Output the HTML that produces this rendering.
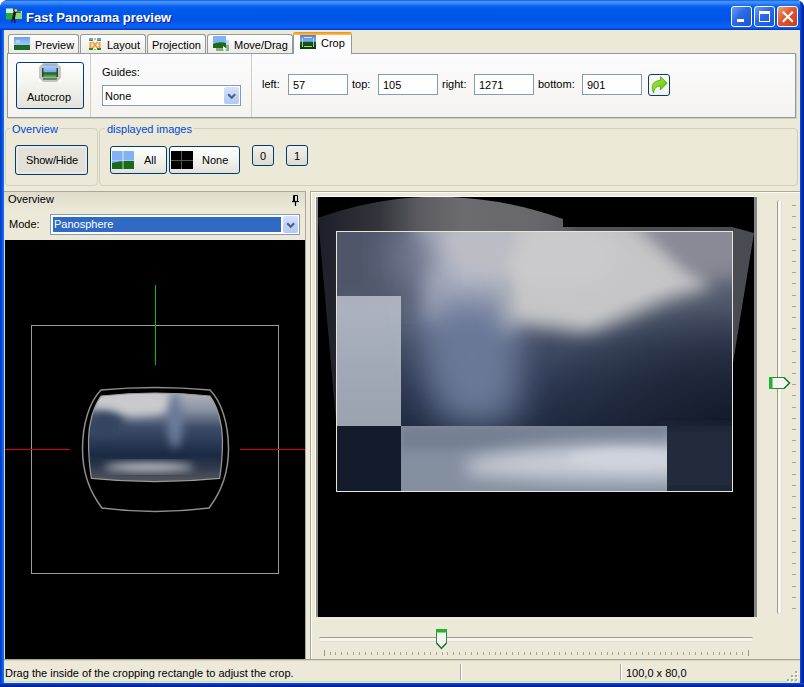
<!DOCTYPE html>
<html><head><meta charset="utf-8">
<style>
*{box-sizing:border-box;margin:0;padding:0}
html,body{width:804px;height:687px;overflow:hidden;background:#fff}
body{position:relative;font-family:"Liberation Sans",sans-serif;font-size:11px;color:#000}
.a{position:absolute}
#win{position:absolute;left:0;top:0;width:804px;height:687px;background:#0831d9;border-radius:8px 8px 0 0;overflow:hidden}
#title{position:absolute;left:0;top:0;width:804px;height:30px;
 background:linear-gradient(#0a3fd0 0px,#3d95ff 1px,#3a8cf8 3px,#0f64ea 6px,#0058ee 9px,#0055e5 20px,#0a5ff5 25px,#0b5ff8 28px,#0040c8 29px,#0040c8 30px)}
#ttext{position:absolute;left:26px;top:10px;color:#fff;font-weight:bold;font-size:13px;text-shadow:1px 1px #0a1e8a;letter-spacing:0}
#lb{position:absolute;left:0;top:30px;width:4px;height:657px;background:linear-gradient(90deg,#0030b8,#0055e5 2px,#166aee 3px)}
#rb{position:absolute;left:800px;top:0px;width:4px;height:687px;background:linear-gradient(90deg,#0a50e8,#0040d0 1px,#0030b0 2px,#001c88)}
#bb{position:absolute;left:0;top:683px;width:804px;height:4px;background:linear-gradient(#0a50e8,#0040d0 1px,#0030b0 2px,#001c88)}
#client{position:absolute;left:4px;top:30px;width:796px;height:653px;background:#ece9d8}
.tab{position:absolute;top:34px;height:19px;border:1px solid #919b9c;border-bottom:none;border-radius:3px 3px 0 0;background:linear-gradient(#fff,#ecebe6);}
.tab span{position:absolute;top:4px}
.tab.sel{top:32px;height:22px;background:#fcfcfe;border-top:none;z-index:2}
.tab.sel:before{content:"";position:absolute;left:-1px;right:-1px;top:0;height:3px;background:linear-gradient(#e68b2c,#ffc73c);border-radius:3px 3px 0 0}
#panel{position:absolute;left:7px;top:53px;width:789px;height:65px;border:1px solid #919b9c;border-top-color:#919b9c;background:linear-gradient(#fcfcfe,#f4f3ee);box-shadow:1px 1px 0 #d0cec0}
.btn{position:absolute;border:1px solid #003c74;border-radius:3px;background:linear-gradient(#fff,#f0f0ea 60%,#e3e2da);text-align:center}
.tb{position:absolute;height:21px;border:1px solid #7f9db9;background:#fff;padding:4px 0 0 4px;font-size:11px}
.grp{position:absolute;border:1px solid #d0d0bf;border-radius:4px}
.glab{position:absolute;color:#0046d5;background:#ece9d8;padding:0 2px}
.tbtn{position:absolute;top:6px;width:21px;height:21px;border:1px solid #fff;border-radius:3px;background:linear-gradient(135deg,#6a9cf8,#2a67e6 45%,#1b55d8);overflow:hidden}
.tbtn.cls{background:linear-gradient(135deg,#f0a080,#e0552f 45%,#c8401c)}
</style></head><body>
<div id="win">
 <div id="title"></div>
 <div id="ttext">Fast Panorama preview</div>
 <div id="lb"></div><div id="rb"></div><div id="bb"></div>
 <div class="tbtn" style="left:731px"><div class="a" style="left:5px;top:12px;width:7px;height:3px;background:#fff"></div></div>
 <div class="tbtn" style="left:754px"><div class="a" style="left:4px;top:4px;width:11px;height:11px;border:1px solid #fff;border-top-width:3px"></div></div>
 <div class="tbtn cls" style="left:777px"><svg class="a" style="left:0;top:0" width="21" height="21"><path d="M4.8 4.8L14.8 14.8M14.8 4.8L4.8 14.8" stroke="#fff" stroke-width="2"/></svg></div>
 <svg class="a" style="left:6px;top:8px" width="17" height="16" viewBox="0 0 17 16">
  <rect x="0" y="0.5" width="7" height="11" fill="#20b030"/>
  <rect x="0" y="0.5" width="7" height="4.5" fill="#c8f0f0"/>
  <rect x="7" y="3" width="9" height="8" fill="#90d870"/>
  <rect x="7" y="3" width="9" height="1.5" fill="#d8f8e8"/>
  <path d="M8.5 1.5 L11 1.5 L11 3.5 L15 3.5 L15 4.5 L10 4.8 L9 10 L9.5 15 L8.3 15 L7.5 10.5 L6 14.5 L5 14.5 L6.5 9 L7.5 3.5 Z" fill="#101018"/>
  <circle cx="9.8" cy="2.5" r="1.4" fill="#f0d030"/>
 </svg>
</div>
<div id="client">
</div>
<!-- tabs -->
<div class="tab" style="left:8px;width:71px"><span style="left:26px">Preview</span>
 <svg class="a" style="left:5px;top:2px" width="16" height="13"><defs><linearGradient id="gsky" x1="0" y1="0" x2="0" y2="1"><stop offset="0" stop-color="#6f9ef0"/><stop offset="1" stop-color="#a8cdfb"/></linearGradient></defs>
 <rect x="0" y="0" width="16" height="9" fill="url(#gsky)"/><rect x="0" y="8" width="16" height="5" fill="#1b6a1e"/><rect x="2" y="3" width="4" height="3" fill="#cfe3fb" opacity=".6"/></svg></div>
<div class="tab" style="left:80px;width:66px"><span style="left:26px">Layout</span>
 <svg class="a" style="left:7px;top:2px" width="14" height="14">
 <rect x="1" y="1" width="4" height="2" fill="#6a9ee8"/><rect x="9" y="1" width="4" height="2" fill="#6a9ee8"/><rect x="6" y="1" width="2" height="2" fill="#f0c030"/>
 <rect x="1" y="3" width="4" height="1" fill="#3a9a4a"/><rect x="9" y="3" width="4" height="1" fill="#3a9a4a"/>
 <rect x="1.5" y="5" width="2" height="6" fill="#f39a3c"/><rect x="10.5" y="5" width="2" height="6" fill="#f39a3c"/>
 <path d="M4.5 5L9.5 11M9.5 5L4.5 11" stroke="#f39a3c" stroke-width="1.8"/>
 <rect x="1" y="11" width="4" height="2" fill="#2a8a1a"/><rect x="9" y="11" width="4" height="2" fill="#2a8a1a"/><rect x="6" y="12" width="2" height="1" fill="#c0a040"/></svg></div>
<div class="tab" style="left:147px;width:59px"><span style="left:4px">Projection</span></div>
<div class="tab" style="left:207px;width:86px"><span style="left:26px">Move/Drag</span>
 <svg class="a" style="left:5px;top:1px" width="17" height="16">
 <rect x="3" y="4" width="13" height="11" fill="#8aae8a"/><rect x="3" y="4" width="13" height="5" fill="#c8d8f0"/>
 <rect x="0" y="0" width="13" height="12" fill="#1a6a1a"/><path d="M0 0H13V7Q6 5 0 8Z" fill="#7fb2f8"/>
 <path d="M10 10L14 13L12 13.5L13 15L11 15L10 13Z" fill="#fff"/></svg></div>
<div class="tab sel" style="left:293px;width:59px"><span style="left:27px;top:5px">Crop</span>
 <svg class="a" style="left:6px;top:3px" width="16" height="14">
 <defs><linearGradient id="gcrop" x1="0" y1="0" x2="0" y2="1"><stop offset="0" stop-color="#5a7ad8"/><stop offset=".45" stop-color="#7ab0f8"/><stop offset=".5" stop-color="#1a5a1a"/><stop offset="1" stop-color="#0a3a0a"/></linearGradient></defs>
 <rect x="0" y="0" width="16" height="14" fill="url(#gcrop)"/>
 <rect x="4" y="2" width="8" height="1" fill="#d8e4fb"/><rect x="4" y="11" width="8" height="1" fill="#b8d0a8"/>
 <rect x="2" y="3" width="1" height="9" fill="#c8e0c0" opacity=".8"/><rect x="13" y="3" width="1" height="9" fill="#c8e0c0" opacity=".8"/></svg></div>
<div id="panel"></div>
<div class="btn" style="left:16px;top:62px;width:68px;height:47px"><span class="a" style="left:10px;top:28px">Autocrop</span>
 <svg class="a" style="left:22px;top:0px" width="22" height="19">
 <defs><linearGradient id="gac" x1="0" y1="0" x2="0" y2="1"><stop offset="0" stop-color="#8a9ab8"/><stop offset=".12" stop-color="#a8c8f8"/><stop offset=".5" stop-color="#78a8f0"/><stop offset=".55" stop-color="#1a5a1a"/><stop offset=".75" stop-color="#4a9a4a"/><stop offset=".88" stop-color="#8ac08a"/><stop offset="1" stop-color="#1a3a1a"/></linearGradient></defs>
 <rect x="0" y="0" width="22" height="19" fill="#c4c4c0"/>
 <rect x="4" y="1.5" width="14" height="15" fill="url(#gac)"/>
 <rect x="3" y="5" width="1.5" height="9" fill="#2a4a2a"/><rect x="17.5" y="5" width="1.5" height="9" fill="#2a4a2a"/>
 <path d="M0 0H4L0 4Z M22 0H18L22 4Z M0 19H4L0 15Z M22 19H18L22 15Z" fill="#fff"/></svg></div>
<div class="a" style="left:90px;top:54px;width:1px;height:63px;background:#d0cec0"></div>
<div class="a" style="left:102px;top:66px">Guides:</div>
<div class="tb" style="left:102px;top:85px;width:139px;padding-left:2px">None
 <div class="a" style="left:121px;top:1px;width:15px;height:17px;border-radius:2px;background:linear-gradient(#d8e2fc,#c0d0f8 60%,#b4c8f6)"></div>
 <svg class="a" style="left:124px;top:7px" width="10" height="7"><path d="M1.2 1.2L4.7 4.7L8.2 1.2" stroke="#4d6185" stroke-width="2.2" fill="none"/></svg></div>
<div class="a" style="left:251px;top:54px;width:1px;height:63px;background:#d0cec0"></div>
<div class="a" style="left:262px;top:78px">left:</div>
<div class="tb" style="left:288px;top:74px;width:60px">57</div>
<div class="a" style="left:352px;top:78px">top:</div>
<div class="tb" style="left:378px;top:74px;width:60px">105</div>
<div class="a" style="left:442px;top:78px">right:</div>
<div class="tb" style="left:474px;top:74px;width:60px">1271</div>
<div class="a" style="left:538px;top:78px">bottom:</div>
<div class="tb" style="left:582px;top:74px;width:60px">901</div>
<div class="btn" style="left:648px;top:74px;width:22px;height:22px;background:linear-gradient(#fdfdfb,#f2f1ec)">
 <svg class="a" style="left:0px;top:0px" width="20" height="20"><defs><linearGradient id="garr" x1="0" y1="0" x2="1" y2="1"><stop offset="0" stop-color="#a8f040"/><stop offset=".6" stop-color="#7ad020"/><stop offset="1" stop-color="#4aa010"/></linearGradient></defs>
 <path d="M11.4 1.5 L18.2 8.2 L11.4 15 L11.4 11.2 C 7.5 11 5.2 13 4.6 18 C 2 13 2.5 5.8 11.4 5.3 Z" fill="url(#garr)" stroke="#4a9a10" stroke-width="0.7"/></svg></div>

<!-- row 2 -->
<div class="grp" style="left:5px;top:128px;width:93px;height:58px"></div>
<div class="glab" style="left:10px;top:123px">Overview</div>
<div class="btn" style="left:15px;top:145px;width:73px;height:30px;background:#e3e1d7;box-shadow:inset 0 0 0 2px #ebe9e1"><span class="a" style="left:10px;top:8px;letter-spacing:-0.15px">Show/Hide</span></div>
<div class="grp" style="left:99px;top:128px;width:699px;height:58px"></div>
<div class="glab" style="left:105px;top:123px">displayed images</div>
<div class="btn" style="left:110px;top:146px;width:57px;height:28px"><span class="a" style="left:33px;top:7px">All</span>
 <svg class="a" style="left:1px;top:4px" width="22" height="18"><rect width="22" height="18" fill="#1a6a1a"/><path d="M0 0H22V10Q12 9 0 12Z" fill="#82b2f4"/><rect x="0" y="9" width="22" height="1" fill="#b8d4f8" opacity=".7"/><rect x="10" y="0" width="2" height="18" fill="#fff" opacity=".35"/></svg></div>
<div class="btn" style="left:169px;top:146px;width:71px;height:28px"><span class="a" style="left:32px;top:7px">None</span>
 <svg class="a" style="left:1px;top:4px" width="22" height="18"><rect width="22" height="18" fill="#000"/><rect x="10" y="0" width="1" height="18" fill="#555"/><rect x="0" y="9" width="22" height="1" fill="#555"/></svg></div>
<div class="btn" style="left:252px;top:145px;width:22px;height:21px;background:linear-gradient(#f2f1ea,#dddbd0)"><span class="a" style="left:7px;top:4px">0</span></div>
<div class="btn" style="left:286px;top:145px;width:22px;height:21px;background:linear-gradient(#f2f1ea,#dddbd0)"><span class="a" style="left:7px;top:4px">1</span></div>

<!-- left overview panel -->
<div class="a" style="left:4px;top:191px;width:301px;height:20px;background:linear-gradient(#dedbcc,#ece9d8)"></div>
<div class="a" style="left:8px;top:193px">Overview</div>
<div class="a" style="left:9px;top:218px">Mode:</div>
<div class="a" style="left:50px;top:214px;width:250px;height:21px;border:1px solid #7f9db9;background:#fff"></div>
<div class="a" style="left:53px;top:217px;width:228px;height:15px;background:#316ac5;color:#fff;padding:1px 0 0 1px">Panosphere</div>
<div class="a" style="left:283px;top:216px;width:15px;height:17px;border-radius:2px;background:linear-gradient(#d8e2fc,#c0d0f8 60%,#b4c8f6)"></div>
<svg class="a" style="left:286px;top:222px" width="10" height="7"><path d="M1.2 1.2L4.7 4.7L8.2 1.2" stroke="#4d6185" stroke-width="2.2" fill="none"/></svg>
<svg class="a" style="left:291px;top:194px" width="9" height="12"><path d="M2.5 1.5H6.5V7.5H2.5Z" fill="none" stroke="#000" stroke-width="1"/><path d="M1 7.5H8" stroke="#000" stroke-width="1.2"/><path d="M4.5 8V12" stroke="#000" stroke-width="1.2"/><rect x="3" y="2" width="1" height="5" fill="#000"/></svg>
<svg class="a" style="left:4px;top:240px" width="301" height="419" viewBox="0 0 301 419">
 <defs>
  <clipPath id="oc"><path d="M97.0 156.0 Q151.0 150.0 206.0 156.0 C214.0 167.0 218.5 185.0 218.5 200.0 C218.5 218.0 217.0 230.0 215.6 238.4 Q151.0 245.0 87.4 238.4 C86.0 230.0 84.5 218.0 84.5 200.0 C84.5 185.0 89.0 167.0 97.0 156.0 Z"/></clipPath>
  <linearGradient id="ob" x1="0" y1="0" x2="0" y2="1"><stop offset=".07" stop-color="#b4b6bc"/><stop offset=".25" stop-color="#8a92a2"/><stop offset=".42" stop-color="#3e4e6a"/><stop offset=".7" stop-color="#1a2a44"/><stop offset=".8" stop-color="#2a3548"/><stop offset=".95" stop-color="#50545e"/></linearGradient>
 </defs>
 <rect width="301" height="419" fill="#000"/>
 <rect x="27.5" y="85.5" width="247" height="248" fill="none" stroke="#9c9c9c" stroke-width="1"/>
 <line x1="151.5" y1="45" x2="151.5" y2="125" stroke="#00c000" stroke-width="1"/>
 <line x1="0" y1="209.5" x2="66" y2="209.5" stroke="#e00000" stroke-width="1"/>
 <line x1="236" y1="209.5" x2="301" y2="209.5" stroke="#e00000" stroke-width="1"/>
 <g clip-path="url(#oc)">
  <rect x="70" y="145" width="160" height="100" fill="url(#ob)"/>
  <ellipse cx="130" cy="162" rx="45" ry="14" fill="#cacacc" filter="url(#b5)"/>
  <ellipse cx="100" cy="183" rx="20" ry="12" fill="#34445e" filter="url(#b5)"/>
  <ellipse cx="171" cy="180" rx="8" ry="28" fill="#6a7a9a" filter="url(#b5)"/>
  <ellipse cx="145" cy="227" rx="45" ry="4" fill="#d0d0d4" filter="url(#b5)"/>
 </g>
 <path d="M97.0 156.0 Q151.0 150.0 206.0 156.0 C214.0 167.0 218.5 185.0 218.5 200.0 C218.5 218.0 217.0 230.0 215.6 238.4 Q151.0 245.0 87.4 238.4 C86.0 230.0 84.5 218.0 84.5 200.0 C84.5 185.0 89.0 167.0 97.0 156.0 Z" fill="none" stroke="#9a9a9a" stroke-width="1.2"/>
 <path d="M97.0 150.0 Q151.0 145.0 206.0 150.0 C218.0 162.0 224.5 185.0 224.5 209.0 C224.5 235.0 215.0 255.0 205.0 268.0 Q151.0 275.0 98.0 268.0 C88.0 255.0 78.5 235.0 78.5 209.0 C78.5 185.0 85.0 162.0 97.0 150.0 Z" fill="none" stroke="#8e8e8e" stroke-width="1.5"/>
</svg>

<!-- right preview panel -->
<svg class="a" style="left:317px;top:197px" width="437" height="420" viewBox="0 0 437 420">
 <defs>
  <linearGradient id="wg" x1="0" y1="0" x2="1" y2="0"><stop offset="0" stop-color="#1e1e28"/><stop offset=".14" stop-color="#34343c"/><stop offset=".23" stop-color="#5a5a60"/><stop offset=".33" stop-color="#6c6c70"/><stop offset=".5" stop-color="#68686c"/><stop offset=".56" stop-color="#606064"/><stop offset=".6" stop-color="#505058"/><stop offset="1" stop-color="#4a4a52"/></linearGradient>
  <linearGradient id="base" x1="0" y1="0" x2="0" y2="1"><stop offset="0" stop-color="#6a7080"/><stop offset=".3" stop-color="#5a6478"/><stop offset=".45" stop-color="#3e4a62"/><stop offset=".6" stop-color="#2c3852"/><stop offset=".75" stop-color="#202c42"/><stop offset="1" stop-color="#262c3a"/></linearGradient>
  <filter id="b20" x="-50%" y="-50%" width="200%" height="200%"><feGaussianBlur stdDeviation="18"/></filter>
  <filter id="b10" x="-50%" y="-50%" width="200%" height="200%"><feGaussianBlur stdDeviation="9"/></filter>
  <filter id="b5" x="-50%" y="-50%" width="200%" height="200%"><feGaussianBlur stdDeviation="4"/></filter>
  <radialGradient id="dr" cx="1" cy="1" r="1"><stop offset="0" stop-color="#101624" stop-opacity=".85"/><stop offset=".45" stop-color="#161c2c" stop-opacity=".6"/><stop offset="1" stop-color="#161c2c" stop-opacity="0"/></radialGradient>
  <clipPath id="pc"><rect x="84" y="229" width="266" height="65"/></clipPath>
  <clipPath id="cr"><rect x="19" y="34" width="396" height="260"/></clipPath>
 </defs>
 <rect width="437" height="420" fill="#000"/>
 <path d="M1 21 Q 120 -22 246 22 L246 30 L415 30 L437 36 L415 172 L415 294 L19 294 L19 223 Z" fill="url(#wg)"/>
 <path d="M246 22 L246 30 L415 30 L246 30Z" fill="#555"/>
 <g clip-path="url(#cr)">
  <rect x="19" y="34" width="396" height="260" fill="url(#base)"/>
  <rect x="0" y="10" width="110" height="100" fill="#50566a" filter="url(#b10)"/>
  <path d="M95 20 L190 20 L195 200 L120 200 Z" fill="#606c88" filter="url(#b20)"/>
  <path d="M95 20 L190 20 L195 140 L110 125 Z" fill="#b8bcc8" filter="url(#b10)"/><ellipse cx="95" cy="60" rx="25" ry="35" fill="#727890" filter="url(#b20)"/><path d="M105 100 L195 100 L198 225 L125 225 Z" fill="#6a7898" filter="url(#b20)"/>
  <path d="M185 20 L327 20 L382 70 L393 92 L355 103 L305 125 L273 136 L229 130 L191 125 Z" fill="#c6c6c8" filter="url(#b10)"/>
  <ellipse cx="240" cy="60" rx="60" ry="30" fill="#cacacc" filter="url(#b10)"/><ellipse cx="165" cy="45" rx="35" ry="30" fill="#bcbcc4" filter="url(#b10)"/>
  <path d="M310 20 L430 20 L430 80 L375 80Z" fill="#8a8a96" filter="url(#b10)"/>
  <rect x="215" y="80" width="200" height="150" fill="url(#dr)"/>
  <rect x="19" y="229" width="396" height="65" fill="#141c2c"/>
  <rect x="340" y="229" width="85" height="65" fill="#242a3a" filter="url(#b5)"/>
    <g clip-path="url(#pc)"><rect x="84" y="229" width="266" height="65" fill="#5a6474"/><rect x="84" y="229" width="266" height="24" fill="#3e4a5c" filter="url(#b5)"/><path d="M150 264 Q250 240 380 248 L380 284 Q250 287 150 277 Z" fill="#d4d4d8" filter="url(#b10)"/><ellipse cx="310" cy="262" rx="60" ry="9" fill="#e2e2e4" filter="url(#b5)"/></g>
  
  <rect x="19" y="99" width="65" height="130" fill="#d0d6de" opacity=".7"/>
  <rect x="84" y="229" width="266" height="65" fill="#b8c4d4" opacity=".45"/>
 </g>
 <rect x="19.5" y="34.5" width="396" height="260" fill="none" stroke="#e6e6da" stroke-width="1"/>
</svg>

<div class="a" style="left:4px;top:240px;width:1px;height:419px;background:#d8d6c8"></div>
<!-- right pane frame -->
<div class="a" style="left:4px;top:191px;width:302px;height:1px;background:#aca899"></div>
<div class="a" style="left:305px;top:191px;width:1px;height:468px;background:#aca899"></div>
<div class="a" style="left:310px;top:191px;width:490px;height:1px;background:#aca899"></div>
<div class="a" style="left:310px;top:191px;width:1px;height:468px;background:#aca899"></div>
<div class="a" style="left:311px;top:192px;width:489px;height:1px;background:#fbfaf4"></div>
<div class="a" style="left:311px;top:192px;width:1px;height:467px;background:#fbfaf4"></div>
<div class="a" style="left:315px;top:196px;width:439px;height:1px;background:#fdfdf8"></div>
<div class="a" style="left:315px;top:196px;width:1px;height:421px;background:#fdfdf8"></div>
<div class="a" style="left:316px;top:197px;width:2px;height:420px;background:#8c8c8c"></div>
<div class="a" style="left:754px;top:197px;width:3px;height:420px;background:#868686"></div>
<svg class="a" style="left:0;top:0" width="804" height="687"><path d="M792 205.5h4M792 216.5h4M792 227.5h4M792 239.5h4M792 250.5h4M792 261.5h4M792 272.5h4M792 283.5h4M792 295.5h4M792 306.5h4M792 317.5h4M792 328.5h4M792 339.5h4M792 351.5h4M792 362.5h4M792 373.5h4M792 384.5h4M792 395.5h4M792 407.5h4M792 418.5h4M792 429.5h4M792 440.5h4M792 451.5h4M792 462.5h4M792 474.5h4M792 485.5h4M792 496.5h4M792 507.5h4M792 518.5h4M792 530.5h4M792 541.5h4M792 552.5h4M792 563.5h4M792 574.5h4M792 586.5h4M792 597.5h4M792 608.5h4" stroke="#a8a492" stroke-width="1"/><path d="M324.5 652v3M330.5 652v3M335.5 652v3M341.5 652v3M347.5 652v3M353.5 652v3M359.5 652v3M365.5 652v3M371.5 652v3M377.5 652v3M383.5 652v3M389.5 652v3M394.5 652v3M400.5 652v3M406.5 652v3M412.5 652v3M418.5 652v3M424.5 652v3M430.5 652v3M436.5 652v3M442.5 652v3M447.5 652v3M453.5 652v3M459.5 652v3M465.5 652v3M471.5 652v3M477.5 652v3M483.5 652v3M489.5 652v3M495.5 652v3M500.5 652v3M506.5 652v3M512.5 652v3M518.5 652v3M524.5 652v3M530.5 652v3M536.5 652v3M542.5 652v3M548.5 652v3M554.5 652v3M559.5 652v3M565.5 652v3M571.5 652v3M577.5 652v3M583.5 652v3M589.5 652v3M595.5 652v3M601.5 652v3M607.5 652v3M612.5 652v3M618.5 652v3M624.5 652v3M630.5 652v3M636.5 652v3M642.5 652v3M648.5 652v3M654.5 652v3M660.5 652v3M665.5 652v3M671.5 652v3M677.5 652v3M683.5 652v3M689.5 652v3M695.5 652v3M701.5 652v3M707.5 652v3M713.5 652v3M719.5 652v3M724.5 652v3M730.5 652v3M736.5 652v3M742.5 652v3M748.5 652v3" stroke="#a8a492" stroke-width="1"/><path d="M324.5 650v6M748.5 650v6" stroke="#9a9684"/></svg>
<!-- vertical slider -->
<div class="a" style="left:777px;top:200px;width:5px;height:414px;border-radius:2px;background:#f7f6f0;border-left:1px solid #9d9a8b;box-shadow:inset -1px 0 0 #e0ded2"></div>

<svg class="a" style="left:768px;top:376px" width="24" height="14"><path d="M1.5 1.5H16L21.5 7L16 12.5H1.5Z" fill="#f4f4f0" stroke="#2a8a3a" stroke-width="1"/><rect x="1" y="1" width="3.5" height="12" fill="#21b330"/><path d="M16 1.5L21.5 7L16 12.5" fill="none" stroke="#1a7a2a" stroke-width="1.5"/></svg>
<!-- horizontal slider -->
<div class="a" style="left:319px;top:637px;width:434px;height:5px;border-radius:2px;background:#f7f6f0;border-top:1px solid #9d9a8b;box-shadow:inset 0 -1px 0 #e0ded2"></div>

<svg class="a" style="left:435px;top:628px" width="13" height="22"><path d="M1.5 1.5H11.5V15L6.5 20.5L1.5 15Z" fill="#f4f4f0" stroke="#2a8a3a" stroke-width="1"/><rect x="1" y="1" width="11" height="3.5" fill="#21b330"/><path d="M1.5 15L6.5 20.5L11.5 15" fill="none" stroke="#1a7a2a" stroke-width="1.5"/></svg>
<!-- status bar -->
<div class="a" style="left:4px;top:659px;width:796px;height:24px;background:#ece9d8;border-top:1px solid #a8a490;box-shadow:inset 0 1px 0 #d8d4c2"></div>
<div class="a" style="left:5px;top:667px">Drag the inside of the cropping rectangle to adjust the crop.</div>
<div class="a" style="left:460px;top:664px;width:1px;height:16px;background:#aca899"></div>
<div class="a" style="left:461px;top:664px;width:1px;height:16px;background:#fff"></div>
<div class="a" style="left:620px;top:664px;width:1px;height:16px;background:#aca899"></div>
<div class="a" style="left:621px;top:664px;width:1px;height:16px;background:#fff"></div>
<div class="a" style="left:626px;top:667px">100,0 x 80,0</div>
<div class="a" style="left:4px;top:681px;width:796px;height:1px;background:#c8dcc0"></div>
<svg class="a" style="left:786px;top:670px" width="13" height="13"><g fill="#fff"><rect x="10" y="2" width="2" height="2"/><rect x="6" y="6" width="2" height="2"/><rect x="10" y="6" width="2" height="2"/><rect x="2" y="10" width="2" height="2"/><rect x="6" y="10" width="2" height="2"/><rect x="10" y="10" width="2" height="2"/></g><g fill="#aca899"><rect x="9" y="1" width="2" height="2"/><rect x="5" y="5" width="2" height="2"/><rect x="9" y="5" width="2" height="2"/><rect x="1" y="9" width="2" height="2"/><rect x="5" y="9" width="2" height="2"/><rect x="9" y="9" width="2" height="2"/></g></svg>
</body></html>
